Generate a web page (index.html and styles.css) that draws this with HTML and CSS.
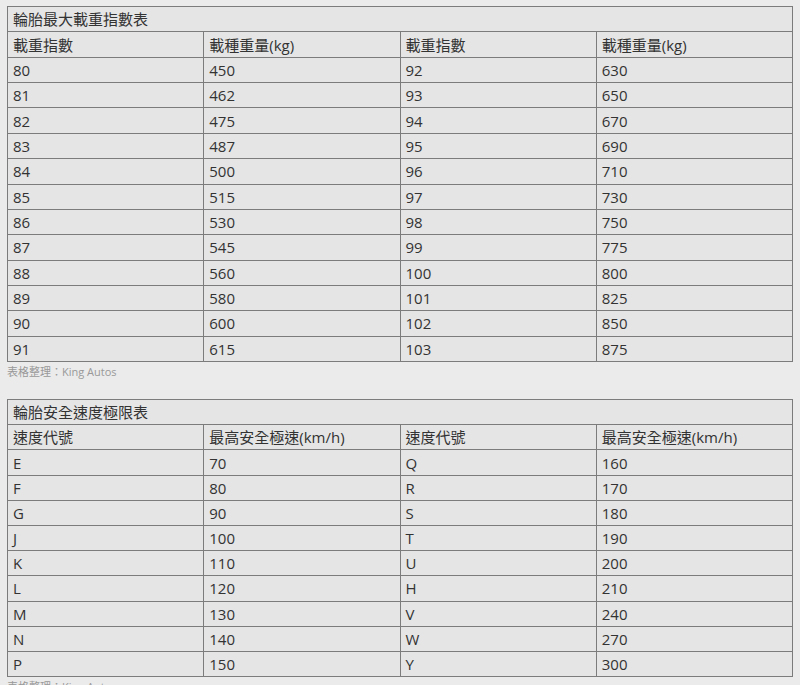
FILE: index.html
```html
<!DOCTYPE html>
<html lang="zh-Hant">
<head>
<meta charset="utf-8">
<link rel="stylesheet" href="styles.css">
</head>
<body>
<div class="page">
<table class="spec">
<tr><td class="title" colspan="4">輪胎最大載重指數表</td></tr>
<tr><td>載重指數</td><td>載種重量(kg)</td><td>載重指數</td><td>載種重量(kg)</td></tr>
<tr><td>80</td><td>450</td><td>92</td><td>630</td></tr>
<tr><td>81</td><td>462</td><td>93</td><td>650</td></tr>
<tr><td>82</td><td>475</td><td>94</td><td>670</td></tr>
<tr><td>83</td><td>487</td><td>95</td><td>690</td></tr>
<tr><td>84</td><td>500</td><td>96</td><td>710</td></tr>
<tr><td>85</td><td>515</td><td>97</td><td>730</td></tr>
<tr><td>86</td><td>530</td><td>98</td><td>750</td></tr>
<tr><td>87</td><td>545</td><td>99</td><td>775</td></tr>
<tr><td>88</td><td>560</td><td>100</td><td>800</td></tr>
<tr><td>89</td><td>580</td><td>101</td><td>825</td></tr>
<tr><td>90</td><td>600</td><td>102</td><td>850</td></tr>
<tr><td>91</td><td>615</td><td>103</td><td>875</td></tr>
</table>
<p class="note">表格整理：King Autos</p>
<table class="spec speed">
<tr><td class="title" colspan="4">輪胎安全速度極限表</td></tr>
<tr><td>速度代號</td><td>最高安全極速(km/h)</td><td>速度代號</td><td>最高安全極速(km/h)</td></tr>
<tr><td>E</td><td>70</td><td>Q</td><td>160</td></tr>
<tr><td>F</td><td>80</td><td>R</td><td>170</td></tr>
<tr><td>G</td><td>90</td><td>S</td><td>180</td></tr>
<tr><td>J</td><td>100</td><td>T</td><td>190</td></tr>
<tr><td>K</td><td>110</td><td>U</td><td>200</td></tr>
<tr><td>L</td><td>120</td><td>H</td><td>210</td></tr>
<tr><td>M</td><td>130</td><td>V</td><td>240</td></tr>
<tr><td>N</td><td>140</td><td>W</td><td>270</td></tr>
<tr><td>P</td><td>150</td><td>Y</td><td>300</td></tr>
</table>
<p class="note">表格整理：King Autos</p>
</div>
</body>
</html>
```
FILE: styles.css
```css
html, body {
  margin: 0;
  padding: 0;
  background: #ebebeb;
}
.page {
  padding: 6px 8px 0 7px;
  font-family: "Open Sans", "Noto Sans CJK TC", sans-serif;
  color: #333;
}
.spec {
  width: 786px;
  border-collapse: collapse;
  table-layout: fixed;
  background: #e5e5e5;
  font-size: 15px;
}
.spec td {
  border: 1px solid #7c7c7c;
  height: 24.36px;
  padding: 0 0 0 5px;
  line-height: 20px;
  vertical-align: middle;
  white-space: nowrap;
}
.speed td {
  height: 24.2px;
}
.note {
  margin: 2px 0 19px 0;
  font-size: 11px;
  line-height: 16px;
  color: #999;
}
```
